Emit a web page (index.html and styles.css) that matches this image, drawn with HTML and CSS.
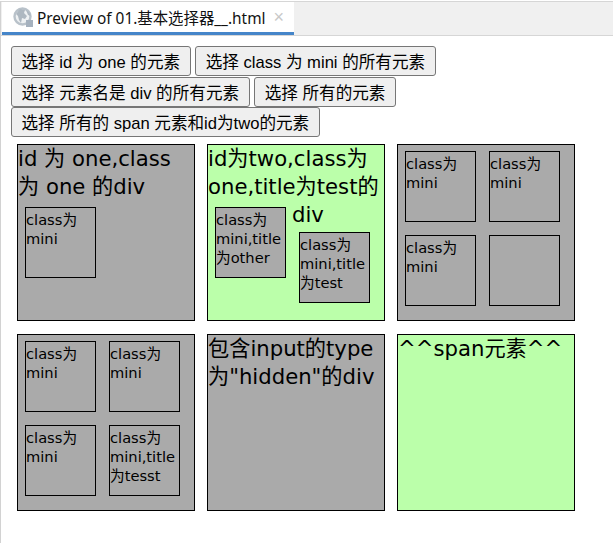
FILE: index.html
```html
<!DOCTYPE html>
<html lang="zh">
<head>
<meta charset="utf-8">
<title>Preview of 01.基本选择器__.html</title>
<link rel="stylesheet" href="styles.css">
</head>
<body>
<div class="tabbar">
  <div class="tab">
    <svg class="globe" width="20" height="20" viewBox="0 0 20 20">
      <circle cx="9.5" cy="9.5" r="8" fill="#eef1f3" stroke="#b9c2ca" stroke-width="2.4"/>
      <path d="M3 7l4-5 5 1-1 3 3 3-2 3-3-1-1 5-2-3-1-4z" fill="#aeb8c1"/>
      <path d="M13 3l3 2 2 4-3-1z" fill="#aeb8c1"/>
      <rect x="13" y="13" width="7" height="7" fill="#a5b1be"/>
    </svg>
    <span class="tab-title">Preview of 01.基本选择器__.html</span>
    <span class="tab-close">×</span>
  </div>
</div>
<main class="page">
  <div class="buttons">
    <button>选择 id 为 one 的元素</button>
    <button>选择 class 为 mini 的所有元素</button>
    <button>选择 元素名是 div 的所有元素</button>
    <button>选择 所有的元素</button>
    <button>选择 所有的 span 元素和id为two的元素</button>
  </div>
  <div class="grid">
    <div class="box">id 为 one,class 为 one 的div
      <div class="mini">class为 mini</div>
    </div>
    <div class="box green">id为two,class为 one,title为test的
      <div class="mini">class为 mini,title为other</div>
      div
      <div class="mini after-short-line">class为 mini,title为test</div>
    </div>
    <div class="box">
      <div class="mini">class为 mini</div>
      <div class="mini">class为 mini</div>
      <div class="mini">class为 mini</div>
      <div class="mini"></div>
    </div>
    <div class="box">
      <div class="mini">class为 mini</div>
      <div class="mini">class为 mini</div>
      <div class="mini">class为 mini</div>
      <div class="mini">class为 mini,title为tesst</div>
    </div>
    <div class="box">包含input的type为"hidden"的div
      <input type="hidden">
    </div>
    <div class="box green">^^span元素^^</div>
  </div>
</main>
</body>
</html>
```
FILE: styles.css
```css
* { box-sizing: border-box; }
html, body { margin: 0; padding: 0; }
body {
  height: 543px;
  overflow: hidden;
  background: #fff;
  border-left: 1px solid #d2d2d2;
  border-top: 1px solid #d6d6d6;
  margin-top: 1px;
  font-family: "DejaVu Sans", "Noto Sans CJK SC", sans-serif;
  color: #000;
}
.tabbar {
  height: 34px;
  background: #f0f0f0;
  border-bottom: 1px solid #d6d6d6;
  padding-left: 1px;
}
.tab {
  width: 292px;
  height: 33px;
  background: #fff;
  border-bottom: 3px solid #4585c9;
  display: flex;
  align-items: center;
  padding-left: 11px;
}
.globe { flex: none; }
.tab-title {
  margin-left: 4px;
  font: 15.4px "Noto Sans", "Noto Sans CJK SC", sans-serif;
  color: #111;
  white-space: nowrap;
}
.tab-close {
  margin-left: 8px;
  font: 18px "Liberation Sans", sans-serif;
  color: #c8c8c8;
}
.page { padding: 10px 0 0 10px; }
.buttons {
  display: flex;
  flex-wrap: wrap;
  column-gap: 4.6px;
  row-gap: 0.6px;
}
button {
  height: 30px;
  padding: 0 9.5px;
  font: 16.6px "Liberation Sans", "Noto Sans CJK SC", sans-serif;
  color: #000;
  background: #efefef;
  border: 1px solid #767676;
  border-radius: 3px;
  white-space: nowrap;
}
.grid {
  display: grid;
  grid-template-columns: repeat(3, 178px);
  grid-auto-rows: 177px;
  column-gap: 12px;
  row-gap: 13px;
  margin: 7px 0 0 6px;
}
.box {
  background: #aaa;
  border: 1px solid #000;
  font-size: 21.2px;
  line-height: 27.7px;
}
.green { background: #bbffaa; }
.mini {
  float: left;
  width: 71px;
  height: 71px;
  margin: 6.2px 6px 6.8px 7px;
  padding-top: 2px;
  background: #aaa;
  border: 1px solid #000;
  font-size: 14.67px;
  line-height: 19px;
}
.after-short-line { margin-top: 3.6px; }
```
